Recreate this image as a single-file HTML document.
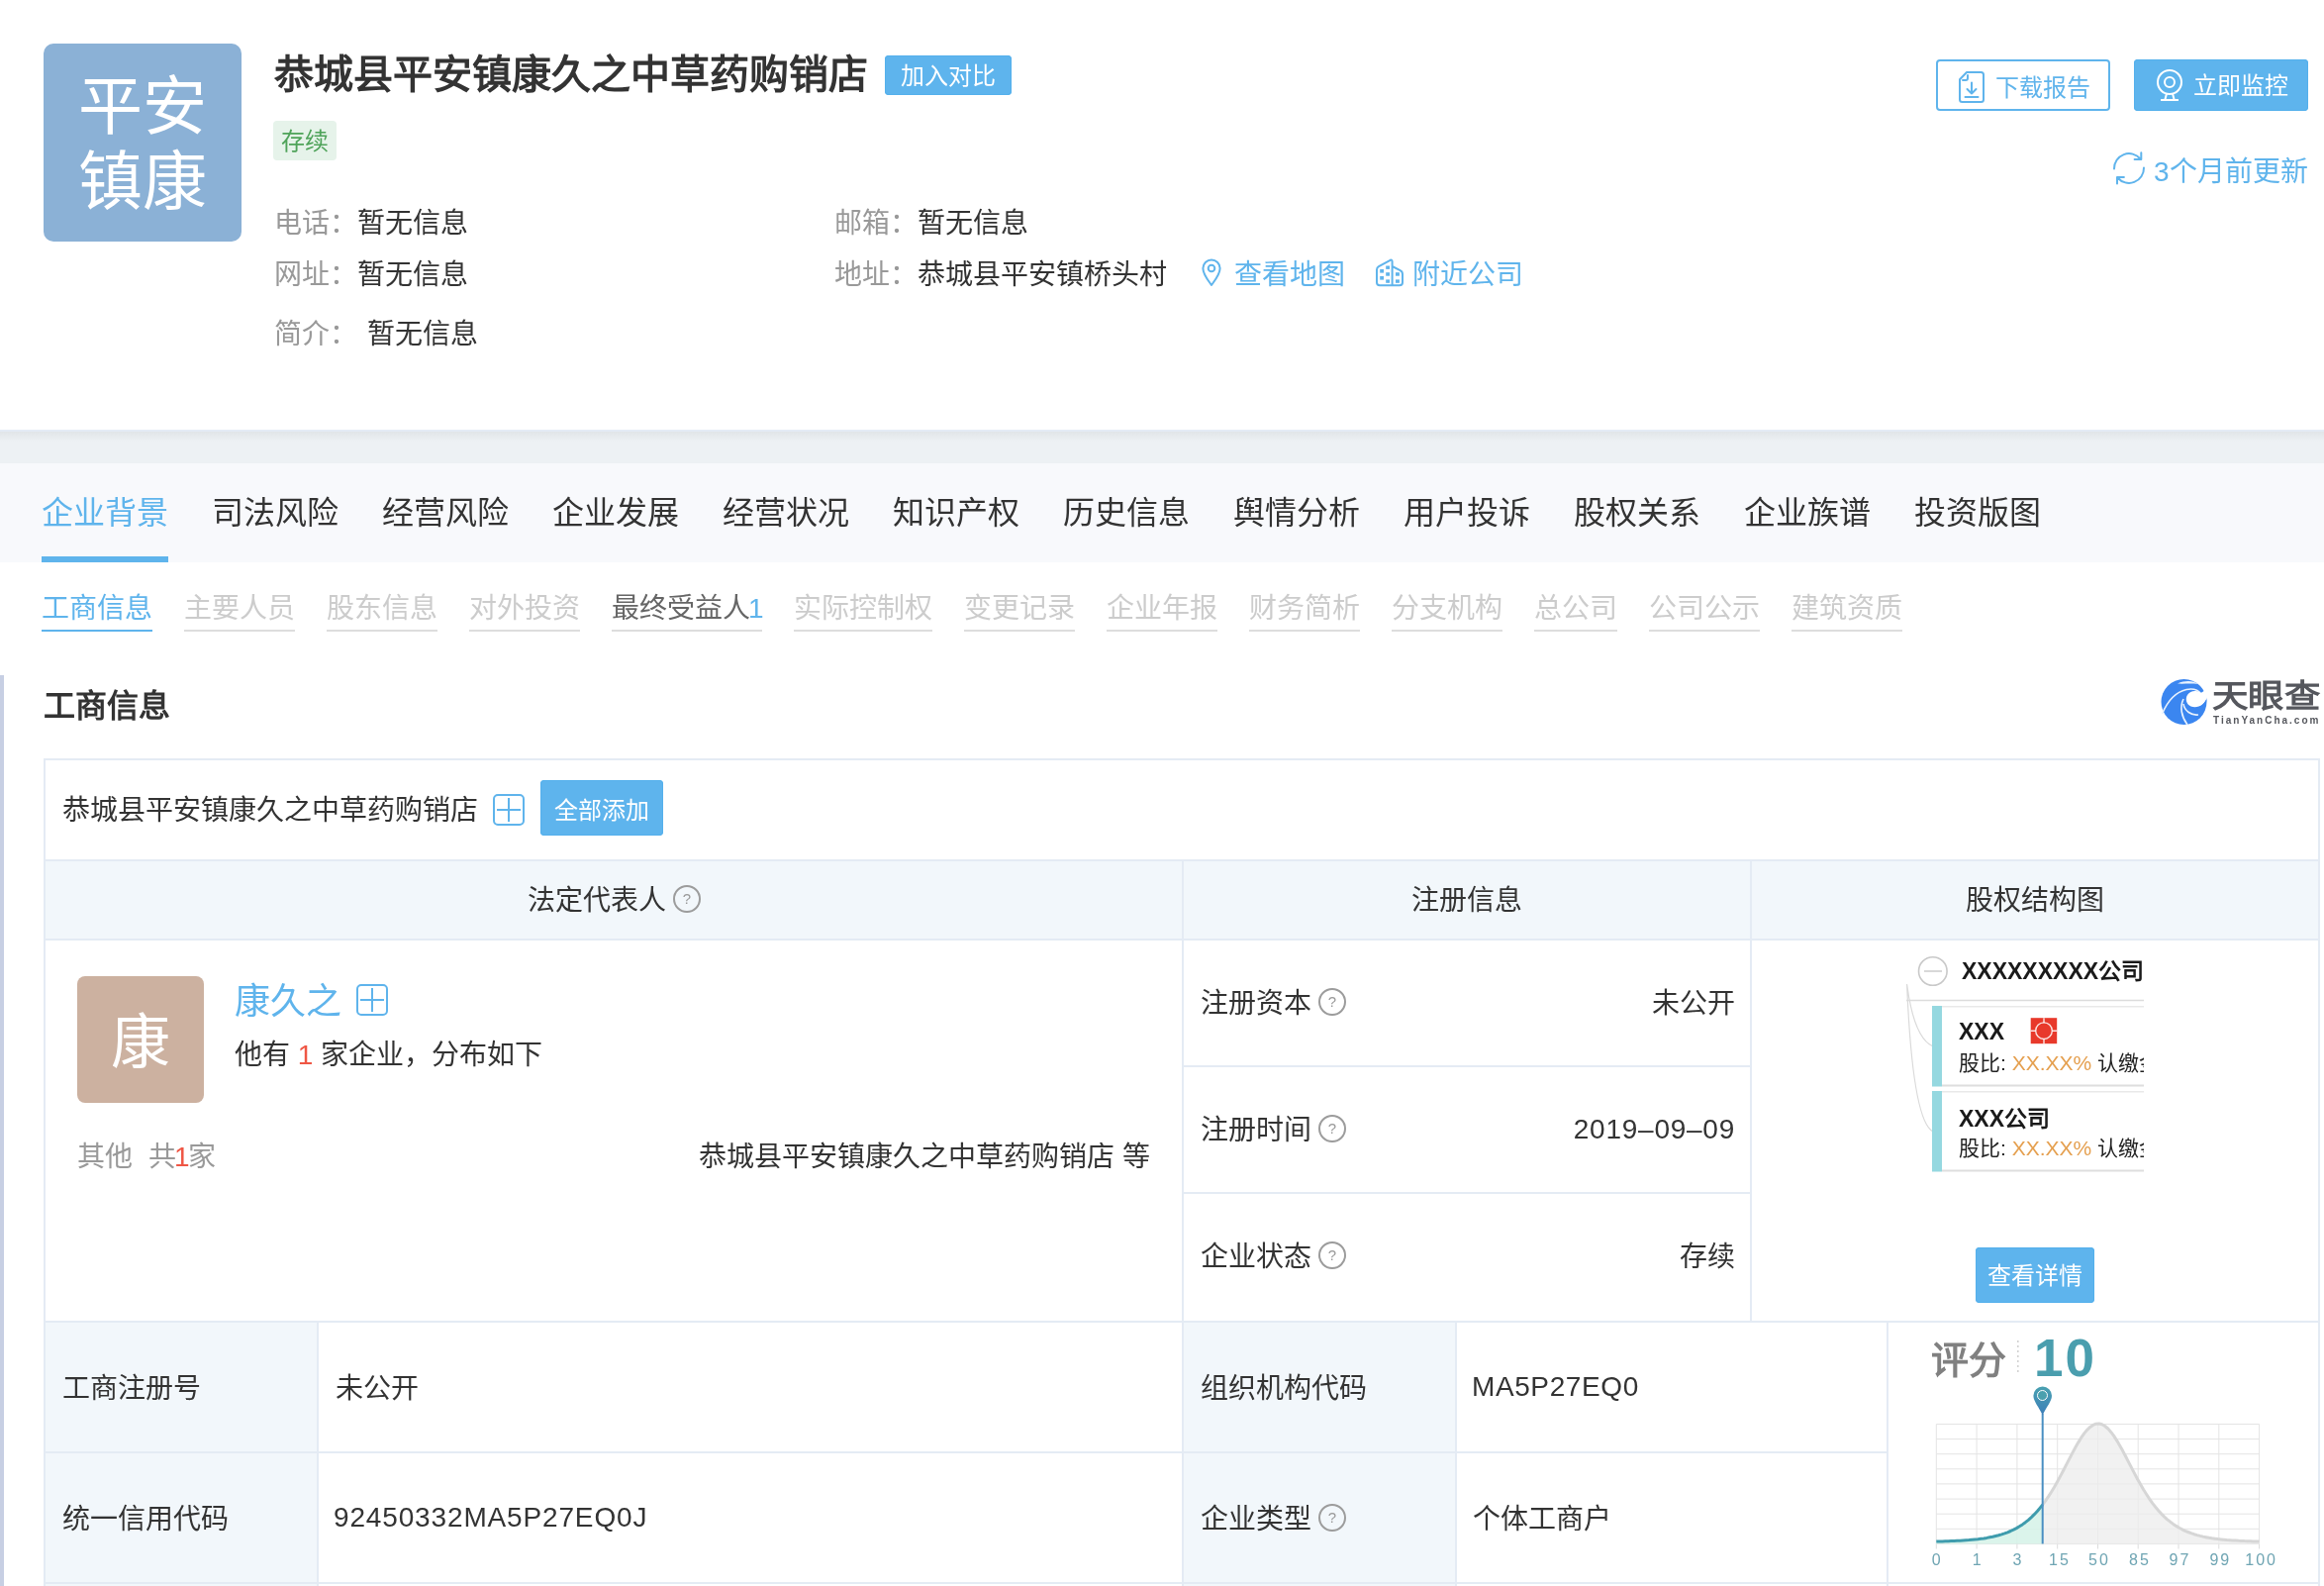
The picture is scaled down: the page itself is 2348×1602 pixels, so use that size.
<!DOCTYPE html>
<html lang="zh-CN">
<head>
<meta charset="utf-8">
<title>恭城县平安镇康久之中草药购销店</title>
<style>
*{box-sizing:border-box;margin:0;padding:0}
html,body{width:2348px;height:1602px;overflow:hidden;background:#fff}
body{font-family:"Liberation Sans",sans-serif;color:#333;position:relative}
#pg{position:absolute;left:0;top:0;width:2348px;height:1602px;overflow:hidden;background:#fff;will-change:transform;-webkit-font-smoothing:antialiased}
.a{position:absolute}
.t{position:absolute;white-space:nowrap;font-size:28px;line-height:40px;height:40px;color:#333}
.g{color:#999}
.b{color:#5fb4ec}
.r{color:#ef5644}
.w{color:#fff}
.f24{font-size:24px}
.f32{font-size:32px}
.btn{position:absolute;background:#5eb4ed;box-shadow:inset 0 0 0 1px #54b0ec;border-radius:4px;color:#fff;font-size:24px;text-align:center;white-space:nowrap}
.ln{position:absolute;background:#e4ebf4}
.hd{position:absolute;background:#f2f7fb}
.plus{position:absolute;width:32px;height:32px;border:2px solid #5fb4ec;border-radius:5px}
.plus:before{content:"";position:absolute;left:2px;top:13px;width:24px;height:2px;background:#5fb4ec}
.plus:after{content:"";position:absolute;left:13px;top:2px;width:2px;height:24px;background:#5fb4ec}
.q{position:absolute;width:28px;height:28px;border:2px solid #9c9c9c;border-radius:50%;color:#999;font-size:15px;line-height:24px;text-align:center}
.nav{position:absolute;top:498px;font-size:32px;line-height:40px;height:40px;white-space:nowrap;color:#333}
.sub{position:absolute;top:595px;font-size:28px;line-height:40px;height:43px;white-space:nowrap;color:#ccc;border-bottom:2px solid #ddd}
.ax{top:1566px;width:60px;text-align:center;font-size:16px;line-height:20px;height:20px;color:#6fa5b3;letter-spacing:2px;text-indent:2px}
.nav.b,.sub.b{color:#5fb4ec}
</style>
</head>
<body>
<div id="pg">

<!-- ===== header ===== -->
<div class="a" style="left:44px;top:44px;width:200px;height:200px;border-radius:10px;background:#8bb1d6"></div>
<div class="t w" style="left:44px;top:70px;width:200px;height:152px;font-size:65px;line-height:76px;text-align:center">平安<br>镇康</div>

<div class="t" style="left:277px;top:50px;font-size:40px;line-height:50px;height:50px;font-weight:bold;color:#333">恭城县平安镇康久之中草药购销店</div>
<div class="btn" style="left:894px;top:56px;width:128px;height:40px;line-height:42px">加入对比</div>
<div class="a" style="left:276px;top:122px;width:64px;height:40px;border-radius:4px;background:#e6f3ea;color:#4fa35a;font-size:24px;line-height:42px;text-align:center;white-space:nowrap">存续</div>

<div class="t g" style="left:277px;top:206px">电话：</div>
<div class="t" style="left:361px;top:206px">暂无信息</div>
<div class="t g" style="left:843px;top:206px">邮箱：</div>
<div class="t" style="left:927px;top:206px">暂无信息</div>

<div class="t g" style="left:277px;top:258px">网址：</div>
<div class="t" style="left:361px;top:258px">暂无信息</div>
<div class="t g" style="left:843px;top:258px">地址：</div>
<div class="t" style="left:927px;top:258px">恭城县平安镇桥头村</div>
<div class="t b" style="left:1247px;top:258px">查看地图</div>
<div class="t b" style="left:1427px;top:258px">附近公司</div>

<div class="t g" style="left:277px;top:318px">简介：</div>
<div class="t" style="left:371px;top:318px">暂无信息</div>

<!-- right buttons -->
<div class="a" style="left:1956px;top:60px;width:176px;height:52px;border:2px solid #5fb4ec;border-radius:4px"></div>
<div class="t b f24" style="left:2016px;top:69px">下载报告</div>
<div class="btn" style="left:2156px;top:60px;width:176px;height:52px"></div>
<div class="t w f24" style="left:2216px;top:67px">立即监控</div>
<div class="t b" style="left:2176px;top:154px">3个月前更新</div>

<!-- icons -->
<svg class="a" style="left:1970px;top:64px" width="44" height="44" viewBox="1970 64 44 44" fill="none" stroke="#5fb4ec" stroke-width="2" stroke-linecap="round" stroke-linejoin="round">
<path d="M1987 73H2001.5Q2004 73 2004 75.5V100.5Q2004 103 2001.5 103H1982.5Q1980 103 1980 100.5V80.2Z"/>
<path d="M1988 76V79Q1988 81 1986 81H1983"/>
<path d="M1992 83.5V94.5M1987.5 90L1992 94.5L1996.5 90M1985.5 98H1998.5"/>
</svg>
<svg class="a" style="left:2174px;top:64px" width="36" height="44" viewBox="2174 64 36 44" fill="none" stroke="#fff" stroke-width="2">
<circle cx="2192" cy="83" r="12"/><circle cx="2192" cy="83" r="5"/>
<path d="M2189 94.5L2187.3 101M2195 94.5L2196.7 101M2183 101H2201"/>
</svg>
<svg class="a" style="left:2130px;top:150px" width="42" height="42" viewBox="2130 150 42 42" fill="none" stroke="#5fb4ec" stroke-width="2" stroke-linecap="round" stroke-linejoin="round">
<path d="M2136 170.5A15 15 0 0 1 2162.5 160.5M2163.3 154.3V160.9H2156.6M2166 169.5A15 15 0 0 1 2139.5 179.5M2139 185.6V178.9H2145.9"/>
</svg>
<svg class="a" style="left:1210px;top:256px" width="28" height="38" viewBox="1210 256 28 38" fill="none" stroke="#5fb4ec" stroke-width="2" stroke-linejoin="round">
<path d="M1224 288C1222 285 1215.4 277.5 1215.4 271A8.6 8.6 0 0 1 1232.6 271C1232.6 277.5 1226 285 1224 288Z"/>
<circle cx="1224" cy="271" r="3.3"/>
</svg>
<svg class="a" style="left:1386px;top:256px" width="36" height="38" viewBox="1386 256 36 38" fill="none" stroke="#5fb4ec" stroke-width="2" stroke-linejoin="round">
<path d="M1406.6 288.3H1394Q1391 288.3 1391 285.3V272.5Q1391 270.3 1393 269.2L1404.6 262.8Q1406.6 262 1406.6 264.2V288.3H1414Q1417 288.3 1417 285.3V277Q1417 274.3 1414.6 273.2L1406.6 269"/>
<g fill="#5fb4ec" stroke="none"><rect x="1394.2" y="272" width="3.8" height="3.6"/><rect x="1394.2" y="279" width="3.8" height="3.6"/><rect x="1400.2" y="268.5" width="3.8" height="3.4"/><rect x="1400.2" y="275.2" width="3.8" height="3.5"/><rect x="1400.2" y="282.4" width="3.8" height="3.4"/><rect x="1410" y="275.2" width="3.9" height="3.5"/><rect x="1410" y="282.4" width="3.9" height="3.4"/></g>
</svg>
<!-- tianyancha logo -->
<svg class="a" style="left:2180px;top:682px" width="54" height="54" viewBox="0 0 54 54">
<circle cx="26.5" cy="27" r="23" fill="#3b86f0"/>
<path d="M20 8.5C28 5 36 5.5 41 9C33 8 26 9 20 8.5Z" fill="#e8f2fe"/>
<path d="M4.5 39C10 26 18 17 29 14.5C36 13 41 15 44 19" fill="none" stroke="#e8f2fe" stroke-width="1.6"/>
<path d="M30 50C24 42 22 32 26 24" fill="none" stroke="#e8f2fe" stroke-width="1.6"/>
<path d="M41 40C34 41 27 36 26 29" fill="none" stroke="#e8f2fe" stroke-width="1.6"/>
<path d="M49.8 22C48 30 40 34 33.5 31.5C29 29.5 27.5 24 30 20C33 15.5 39 15 43.5 18L50 14Z" fill="#fff"/>
<path d="M49.6 24C49 31 43 36 36 34C40 34.5 46 31 49.6 24Z" fill="#3b86f0"/>
</svg>
<div class="t" style="left:2235px;top:683px;font-size:32px;line-height:40px;height:40px;font-weight:900;color:#55575d;transform:scaleX(1.14);transform-origin:0 0">天眼查</div>
<div class="t" style="left:2236px;top:722px;font-size:10px;line-height:12px;height:12px;font-weight:bold;color:#55575d;letter-spacing:2px">TianYanCha.com</div>

<!-- ===== separator + nav ===== -->
<div class="a" style="left:0;top:434px;width:2348px;height:2px;background:#e4ebf5"></div>
<div class="a" style="left:0;top:436px;width:2348px;height:32px;background:linear-gradient(#e1e5e8 0,#e6eaed 4px,#ecf0f3 9px,#edf1f4 10px)"></div>
<div class="a" style="left:0;top:468px;width:2348px;height:100px;background:#f8f9fc"></div>
<div class="a" style="left:42px;top:562px;width:128px;height:6px;background:#5fb4ec"></div>
<div class="nav b" style="left:42px">企业背景</div>
<div class="nav" style="left:214px">司法风险</div>
<div class="nav" style="left:386px">经营风险</div>
<div class="nav" style="left:558px">企业发展</div>
<div class="nav" style="left:730px">经营状况</div>
<div class="nav" style="left:902px">知识产权</div>
<div class="nav" style="left:1074px">历史信息</div>
<div class="nav" style="left:1246px">舆情分析</div>
<div class="nav" style="left:1418px">用户投诉</div>
<div class="nav" style="left:1590px">股权关系</div>
<div class="nav" style="left:1762px">企业族谱</div>
<div class="nav" style="left:1934px">投资版图</div>

<!-- sub tabs -->
<div class="sub" style="left:42px;width:112px;color:#5fb4ec;border-color:#5fb4ec">工商信息</div>
<div class="sub" style="left:186px;width:112px">主要人员</div>
<div class="sub" style="left:330px;width:112px">股东信息</div>
<div class="sub" style="left:474px;width:112px">对外投资</div>
<div class="sub" style="left:618px;width:152px;color:#666">最终受益人<span class="b" style="margin-left:-2px">1</span></div>
<div class="sub" style="left:802px;width:140px">实际控制权</div>
<div class="sub" style="left:974px;width:112px">变更记录</div>
<div class="sub" style="left:1118px;width:112px">企业年报</div>
<div class="sub" style="left:1262px;width:112px">财务简析</div>
<div class="sub" style="left:1406px;width:112px">分支机构</div>
<div class="sub" style="left:1550px;width:84px">总公司</div>
<div class="sub" style="left:1666px;width:112px">公司公示</div>
<div class="sub" style="left:1810px;width:112px">建筑资质</div>

<!-- ===== section ===== -->
<div class="a" style="left:0;top:682px;width:4px;height:920px;background:#c7cfe3"></div>
<div class="t" style="left:44px;top:693px;font-size:32px;font-weight:bold">工商信息</div>

<!-- table backgrounds -->
<div class="hd" style="left:44px;top:870px;width:2300px;height:78px"></div>
<div class="hd" style="left:46px;top:1336px;width:274px;height:266px"></div>
<div class="hd" style="left:1196px;top:1336px;width:274px;height:266px"></div>

<!-- horizontal lines -->
<div class="ln" style="left:44px;top:766px;width:2300px;height:2px"></div>
<div class="ln" style="left:44px;top:868px;width:2300px;height:2px"></div>
<div class="ln" style="left:44px;top:948px;width:2300px;height:2px"></div>
<div class="ln" style="left:1194px;top:1076px;width:576px;height:2px"></div>
<div class="ln" style="left:1194px;top:1204px;width:576px;height:2px"></div>
<div class="ln" style="left:44px;top:1334px;width:2300px;height:2px"></div>
<div class="ln" style="left:44px;top:1466px;width:1864px;height:2px"></div>
<div class="ln" style="left:44px;top:1598px;width:2300px;height:2px"></div>
<!-- vertical lines -->
<div class="ln" style="left:44px;top:766px;width:2px;height:836px"></div>
<div class="ln" style="left:2342px;top:766px;width:2px;height:836px"></div>
<div class="ln" style="left:1194px;top:868px;width:2px;height:734px"></div>
<div class="ln" style="left:1768px;top:868px;width:2px;height:468px"></div>
<div class="ln" style="left:320px;top:1334px;width:2px;height:268px"></div>
<div class="ln" style="left:1470px;top:1334px;width:2px;height:268px"></div>
<div class="ln" style="left:1906px;top:1334px;width:2px;height:268px"></div>

<!-- row 1 -->
<div class="t" style="left:63px;top:799px">恭城县平安镇康久之中草药购销店</div>
<div class="plus" style="left:498px;top:802px"></div>
<div class="btn" style="left:546px;top:788px;width:124px;height:56px;line-height:61px">全部添加</div>

<!-- header row -->
<div class="t" style="left:533px;top:890px">法定代表人</div>
<div class="q" style="left:680px;top:894px">?</div>
<div class="t" style="left:1196px;top:890px;width:572px;text-align:center">注册信息</div>
<div class="t" style="left:1770px;top:890px;width:572px;text-align:center">股权结构图</div>

<!-- legal rep cell -->
<div class="a" style="left:78px;top:986px;width:128px;height:128px;border-radius:8px;background:#ccb1a0"></div>
<div class="t w" style="left:78px;top:1016px;width:128px;height:76px;font-size:60px;line-height:76px;text-align:center">康</div>
<div class="t b" style="left:237px;top:989px;font-size:36px;line-height:46px;height:46px">康久之</div>
<div class="plus" style="left:360px;top:994px"></div>
<div class="t" style="left:237px;top:1046px">他有 <span class="r">1</span> 家企业，分布如下</div>
<div class="t g" style="left:78px;top:1149px">其他&nbsp;&nbsp;共<span class="r" style="margin:0 -1.5px">1</span>家</div>
<div class="t" style="left:662px;top:1149px;width:500px;text-align:right">恭城县平安镇康久之中草药购销店 等</div>

<!-- reg info cell -->
<div class="t" style="left:1213px;top:994px">注册资本</div>
<div class="q" style="left:1332px;top:998px">?</div>
<div class="t" style="left:1400px;top:994px;width:353px;text-align:right">未公开</div>
<div class="t" style="left:1213px;top:1122px">注册时间</div>
<div class="q" style="left:1332px;top:1126px">?</div>
<div class="t" style="left:1400px;top:1121px;width:353px;text-align:right;letter-spacing:.75px">2019–09–09</div>
<div class="t" style="left:1213px;top:1250px">企业状态</div>
<div class="q" style="left:1332px;top:1254px">?</div>
<div class="t" style="left:1400px;top:1250px;width:353px;text-align:right">存续</div>

<div class="a" style="left:1926px;top:962px;width:240px;height:226px;overflow:hidden;color:#1a1a1a">
<svg class="a" style="left:0;top:0" width="240" height="226" viewBox="0 0 240 226">
<circle cx="26.8" cy="19" r="14.3" fill="#fff" stroke="#c9c9c9" stroke-width="1.6"/>
<path d="M18 19H36" stroke="#cfcfcf" stroke-width="1.6"/>
<path d="M0 48.5H240" stroke="#dcdcdc" stroke-width="1.6"/>
<path d="M0.6 32C4 58 11 88 27 95M0.6 32C3 90 9 172 27 181" fill="none" stroke="#dadada" stroke-width="1.2"/>
<rect x="26" y="54" width="10" height="81.5" fill="#95d8e0"/>
<rect x="26" y="140" width="10" height="81.5" fill="#95d8e0"/>
<path d="M36 54.8H240M36 140.8H240" stroke="#e9e9e9" stroke-width="1.6"/>
<path d="M36 134.6H240M36 220.6H240" stroke="#dedede" stroke-width="2"/>
<rect x="125.7" y="66.2" width="26.5" height="26" fill="#e8392b"/>
<circle cx="139" cy="79.2" r="8.3" fill="none" stroke="#fff" stroke-width="1.4" stroke-opacity=".85"/>
<path d="M139 66.2v5M139 87.4v5M125.7 79.2h5M147.3 79.2h5" stroke="#fff" stroke-width="1.4" stroke-opacity=".85"/>
</svg>
<div class="t" style="left:56px;top:3px;font-size:23px;line-height:32px;height:32px;font-weight:bold;color:#1a1a1a">XXXXXXXXX公司</div>
<div class="t" style="left:53px;top:64px;font-size:23px;line-height:32px;height:32px;font-weight:bold;color:#1a1a1a">XXX</div>
<div class="t" style="left:53px;top:97px;font-size:21px;line-height:30px;height:30px;color:#222">股比: <span style="color:#e5a050">XX.XX%</span> 认缴金额</div>
<div class="t" style="left:53px;top:152px;font-size:23px;line-height:32px;height:32px;font-weight:bold;color:#1a1a1a">XXX公司</div>
<div class="t" style="left:53px;top:183px;font-size:21px;line-height:30px;height:30px;color:#222">股比: <span style="color:#e5a050">XX.XX%</span> 认缴金额</div>
</div>
<div class="btn" style="left:1996px;top:1260px;width:120px;height:56px;line-height:58px">查看详情</div>

<!-- bottom table -->
<div class="t" style="left:63px;top:1383px">工商注册号</div>
<div class="t" style="left:339px;top:1383px">未公开</div>
<div class="t" style="left:1213px;top:1383px">组织机构代码</div>
<div class="t" style="left:1487px;top:1381px;letter-spacing:.6px">MA5P27EQ0</div>
<div class="t" style="left:63px;top:1515px">统一信用代码</div>
<div class="t" style="left:337px;top:1513px;letter-spacing:.85px">92450332MA5P27EQ0J</div>
<div class="t" style="left:1213px;top:1515px">企业类型</div>
<div class="q" style="left:1332px;top:1519px">?</div>
<div class="t" style="left:1488px;top:1515px">个体工商户</div>

<svg class="a" style="left:1940px;top:1340px" width="400" height="260" viewBox="0 0 400 260">
<g stroke="#e4e4e4" stroke-width="1" fill="none"><path d="M16.3 98.5V219.4"/><path d="M57.1 98.5V219.4"/><path d="M97.9 98.5V219.4"/><path d="M138.7 98.5V219.4"/><path d="M179.5 98.5V219.4"/><path d="M220.2 98.5V219.4"/><path d="M261.0 98.5V219.4"/><path d="M301.8 98.5V219.4"/><path d="M342.6 98.5V219.4"/><path d="M16.3 98.5H342.6"/><path d="M16.3 113.6H342.6"/><path d="M16.3 128.7H342.6"/><path d="M16.3 143.8H342.6"/><path d="M16.3 158.9H342.6"/><path d="M16.3 174.1H342.6"/><path d="M16.3 189.2H342.6"/><path d="M16.3 204.3H342.6"/><path d="M16.3 219.4H342.6"/></g>
<g stroke="#dcdcdc" stroke-width="1" fill="none"><path d="M16.3 219.4V224.5"/><path d="M57.1 219.4V224.5"/><path d="M97.9 219.4V224.5"/><path d="M138.7 219.4V224.5"/><path d="M179.5 219.4V224.5"/><path d="M220.2 219.4V224.5"/><path d="M261.0 219.4V224.5"/><path d="M301.8 219.4V224.5"/><path d="M342.6 219.4V224.5"/></g>
<polygon points="123.7,179.9 126.7,175.8 129.7,171.4 132.7,166.7 135.7,161.7 138.7,156.4 141.7,150.9 144.7,145.2 147.7,139.4 150.7,133.6 153.7,127.9 156.7,122.3 159.7,117.1 162.7,112.2 165.7,107.9 168.7,104.3 171.7,101.4 174.7,99.4 177.7,98.2 180.7,98.0 183.7,98.8 186.7,100.5 189.7,103.0 192.7,106.4 195.7,110.4 198.7,115.1 201.7,120.2 204.7,125.6 207.7,131.3 210.7,137.1 213.7,142.9 216.7,148.6 219.7,154.2 222.7,159.6 225.7,164.7 228.7,169.5 231.7,174.1 234.7,178.3 237.7,182.2 240.7,185.8 243.7,189.1 246.7,192.1 249.7,194.8 252.7,197.2 255.7,199.4 258.7,201.4 261.7,203.2 264.7,204.8 267.7,206.3 270.7,207.5 273.7,208.7 276.7,209.7 279.7,210.6 282.7,211.4 285.7,212.1 288.7,212.7 291.7,213.3 294.7,213.8 297.7,214.2 300.7,214.6 303.7,214.9 306.7,215.2 309.7,215.5 312.7,215.7 315.7,215.9 318.7,216.1 321.7,216.3 324.7,216.4 327.7,216.6 330.7,216.7 333.7,216.8 336.7,216.9 339.7,216.9 342.6,217.0 342.6,219.4 123.7,219.4" fill="#ececec" fill-opacity=".75"/>
<polygon points="16.3,217.0 19.3,216.9 22.3,216.9 25.3,216.8 28.3,216.7 31.3,216.6 34.3,216.5 37.3,216.3 40.3,216.2 43.3,216.0 46.3,215.8 49.3,215.6 52.3,215.3 55.3,215.0 58.3,214.7 61.3,214.3 64.3,213.9 67.3,213.4 70.3,212.8 73.3,212.2 76.3,211.5 79.3,210.8 82.3,209.9 85.3,208.9 88.3,207.8 91.3,206.5 94.3,205.1 97.3,203.6 100.3,201.8 103.3,199.9 106.3,197.7 109.3,195.3 112.3,192.6 115.3,189.7 118.3,186.5 121.3,182.9 123.7,179.9 123.7,219.4 16.3,219.4" fill="#d5f2e8" fill-opacity=".85"/>
<polyline points="123.7,179.9 126.7,175.8 129.7,171.4 132.7,166.7 135.7,161.7 138.7,156.4 141.7,150.9 144.7,145.2 147.7,139.4 150.7,133.6 153.7,127.9 156.7,122.3 159.7,117.1 162.7,112.2 165.7,107.9 168.7,104.3 171.7,101.4 174.7,99.4 177.7,98.2 180.7,98.0 183.7,98.8 186.7,100.5 189.7,103.0 192.7,106.4 195.7,110.4 198.7,115.1 201.7,120.2 204.7,125.6 207.7,131.3 210.7,137.1 213.7,142.9 216.7,148.6 219.7,154.2 222.7,159.6 225.7,164.7 228.7,169.5 231.7,174.1 234.7,178.3 237.7,182.2 240.7,185.8 243.7,189.1 246.7,192.1 249.7,194.8 252.7,197.2 255.7,199.4 258.7,201.4 261.7,203.2 264.7,204.8 267.7,206.3 270.7,207.5 273.7,208.7 276.7,209.7 279.7,210.6 282.7,211.4 285.7,212.1 288.7,212.7 291.7,213.3 294.7,213.8 297.7,214.2 300.7,214.6 303.7,214.9 306.7,215.2 309.7,215.5 312.7,215.7 315.7,215.9 318.7,216.1 321.7,216.3 324.7,216.4 327.7,216.6 330.7,216.7 333.7,216.8 336.7,216.9 339.7,216.9 342.6,217.0" fill="none" stroke="#d6d6d6" stroke-width="3" stroke-linejoin="round"/>
<polyline points="16.3,217.0 19.3,216.9 22.3,216.9 25.3,216.8 28.3,216.7 31.3,216.6 34.3,216.5 37.3,216.3 40.3,216.2 43.3,216.0 46.3,215.8 49.3,215.6 52.3,215.3 55.3,215.0 58.3,214.7 61.3,214.3 64.3,213.9 67.3,213.4 70.3,212.8 73.3,212.2 76.3,211.5 79.3,210.8 82.3,209.9 85.3,208.9 88.3,207.8 91.3,206.5 94.3,205.1 97.3,203.6 100.3,201.8 103.3,199.9 106.3,197.7 109.3,195.3 112.3,192.6 115.3,189.7 118.3,186.5 121.3,182.9 123.7,179.9" fill="none" stroke="#3f9cad" stroke-width="3" stroke-linejoin="round"/>
<path d="M123.7 88V219.4" stroke="#4a8fc2" stroke-width="2"/>
<path d="M98.8 14V49" stroke="#d0d0d0" stroke-width="1.5" stroke-dasharray="2 3"/>
</svg>
<div class="a" style="left:2053px;top:1399px;width:22px;height:32px;background:linear-gradient(#4aa3b0,#3c7cba);clip-path:path('M10.7 30.6C7 22 1.4 16.5 1.4 10.7a9.3 9.3 0 0 1 18.6 0C20 16.5 14.4 22 10.7 30.6Z')"></div>
<div class="a" style="left:2058px;top:1404px;width:11.4px;height:11.4px;border-radius:50%;background:#4aa0ae;border:1.2px solid #fff"></div>
<div class="t" style="left:1951px;top:1350px;font-size:38px;line-height:48px;height:48px;font-weight:bold;color:#808080">评分</div>
<div class="t" style="left:2055px;top:1342px;font-size:53px;line-height:60px;height:60px;font-weight:bold;color:#4a9eae;letter-spacing:2px">10</div>
<div class="t ax" style="left:1926.3px">0</div>
<div class="t ax" style="left:1967.1px">1</div>
<div class="t ax" style="left:2007.9px">3</div>
<div class="t ax" style="left:2050.0px">15</div>
<div class="t ax" style="left:2090.0px">50</div>
<div class="t ax" style="left:2131.0px">85</div>
<div class="t ax" style="left:2171.5px">97</div>
<div class="t ax" style="left:2212.3px">99</div>
<div class="t ax" style="left:2253.6px">100</div>

</div>
</body>
</html>
